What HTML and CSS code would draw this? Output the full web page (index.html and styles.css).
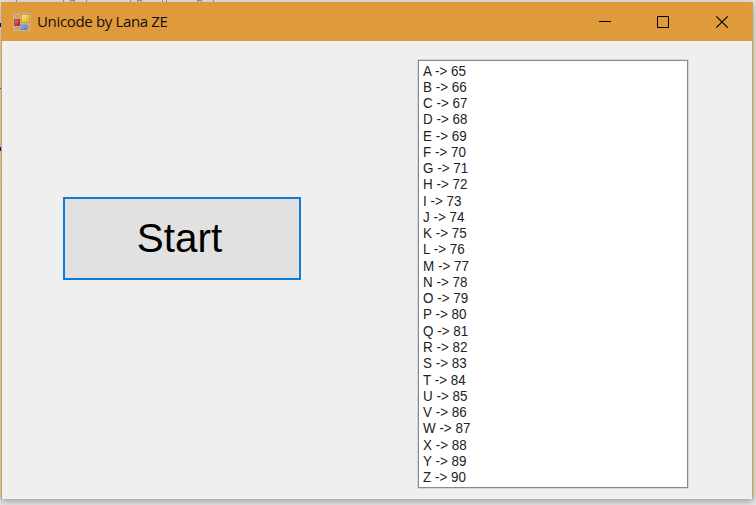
FILE: index.html
```html
<!DOCTYPE html>
<html lang="en">
<head>
<meta charset="utf-8">
<title>Unicode by Lana ZE</title>
<link rel="stylesheet" href="styles.css">
</head>
<body>
<svg class="backdrop" width="756" height="505" shape-rendering="crispEdges" aria-hidden="true">
  <g fill="#999">
    <rect x="16" width="1" height="2"/><rect x="63" width="1" height="2"/><rect x="70" width="5" height="1"/>
    <rect x="86" width="1" height="2"/><rect x="130" width="1" height="2"/><rect x="137" width="5" height="1"/>
    <rect x="162" width="1" height="2"/><rect x="166" width="1" height="2"/><rect x="197" width="5" height="1"/><rect x="213" width="1" height="2"/>
    <rect x="70" y="1" width="1" height="1"/><rect x="74" y="1" width="1" height="1"/>
    <rect x="137" y="1" width="1" height="1"/><rect x="141" y="1" width="1" height="1"/>
    <rect x="197" y="1" width="1" height="1"/><rect x="201" y="1" width="1" height="1"/>
  </g>
</svg>
<main class="window">
  <header class="titlebar">
    <svg class="app-icon" width="18" height="18" viewBox="0 0 18 18" aria-hidden="true">
      <defs>
        <linearGradient id="y" x2="1" y2="1"><stop stop-color="#fff08a"/><stop offset="1" stop-color="#e0a800"/></linearGradient>
        <linearGradient id="b" x2="1" y2="1"><stop stop-color="#9cc4ff"/><stop offset="1" stop-color="#3b74d8"/></linearGradient>
        <linearGradient id="r" x2="1" y2="1"><stop stop-color="#e08080"/><stop offset="1" stop-color="#a01818"/></linearGradient>
      </defs>
      <rect width="18" height="18" rx="1" fill="#c9b08c"/>
      <path d="M2 2h4v3H2zM2 14h4v2H2zM15 12h2v4h-2z" fill="#df9a3b"/>
      <rect x="8.5" y="1.5" width="8" height="8" fill="url(#y)" stroke="#b98a20" stroke-width=".6"/>
      <rect x="1.3" y="6.5" width="5.4" height="6" fill="url(#r)" stroke="#982020" stroke-width=".6"/>
      <rect x="8" y="12" width="6" height="4.5" fill="url(#b)" stroke="#4c78c8" stroke-width=".6"/>
    </svg>
    <h1 class="title">Unicode by Lana ZE</h1>
    <svg class="controls" width="130" height="14" viewBox="0 0 130 14" fill="none" stroke="#000" aria-hidden="true">
      <path d="M0 6.5h12M58.5 1.5h11v11h-11z"/>
      <path d="M117.3 1.3l11.4 11.4M128.7 1.3l-11.4 11.4" stroke-width="1.2"/>
    </svg>
  </header>
  <section class="client">
    <button class="start">Start</button>
    <ul class="list">
      <li>A -&gt; 65</li><li>B -&gt; 66</li><li>C -&gt; 67</li><li>D -&gt; 68</li><li>E -&gt; 69</li>
      <li>F -&gt; 70</li><li>G -&gt; 71</li><li>H -&gt; 72</li><li>I -&gt; 73</li><li>J -&gt; 74</li>
      <li>K -&gt; 75</li><li>L -&gt; 76</li><li>M -&gt; 77</li><li>N -&gt; 78</li><li>O -&gt; 79</li>
      <li>P -&gt; 80</li><li>Q -&gt; 81</li><li>R -&gt; 82</li><li>S -&gt; 83</li><li>T -&gt; 84</li>
      <li>U -&gt; 85</li><li>V -&gt; 86</li><li>W -&gt; 87</li><li>X -&gt; 88</li><li>Y -&gt; 89</li><li>Z -&gt; 90</li>
    </ul>
  </section>
</main>
<svg class="backdrop" width="1" height="505" shape-rendering="crispEdges" aria-hidden="true">
  <g fill="#0000e0"><rect y="23" width="1" height="4"/><rect y="147" width="1" height="4"/></g>
  <g fill="#7fbfdc"><rect y="39" width="1" height="1"/><rect y="52" width="1" height="1"/><rect y="163" width="1" height="1"/><rect y="176" width="1" height="1"/></g>
  <rect y="88" width="1" height="1" fill="#1060b0"/>
</svg>
</body>
</html>
```
FILE: styles.css
```css
* { box-sizing: border-box; }
body {
  margin: 0;
  width: 756px;
  height: 505px;
  overflow: hidden;
  padding: 2px 3px 6px 1px;
  background: #e8e8e8;
}
.backdrop { position: absolute; left: 0; top: 0; }
.window {
  position: relative;
  display: flex;
  flex-direction: column;
  height: 497px;
  background: #efefef;
  border: solid #df9a3b;
  border-width: 0 1px;
  box-shadow: 0 2px 8px rgba(0, 0, 0, .36);
}
.titlebar {
  display: flex;
  align-items: center;
  height: 39px;
  padding: 0 23px 0 11px;
  background: #df9a3b;
}
.title {
  margin: -2px auto 0 6px;
  font: 400 15px/20px "Open Sans", "Noto Sans", sans-serif;
  letter-spacing: -.34px;
  color: #111;
  white-space: nowrap;
}
.client {
  flex: 1;
  display: flex;
  align-items: flex-start;
  justify-content: space-between;
  padding: 19px 64px 0 61px;
}
.start {
  width: 238px;
  height: 83px;
  margin-top: 137px;
  padding: 0 5px 0 0;
  border: 2px solid #0f7bd6;
  background: #e1e1e1;
  color: #000;
  font: 40.4px "Liberation Sans", Arial, sans-serif;
}
.list {
  width: 270px;
  height: 428px;
  margin: 0;
  padding: 1.5px 0 0 3.5px;
  list-style: none;
  background: #fff;
  border: 1px solid #858b93;
  box-shadow: 0 0 0 .5px #b9bdc2;
  font: 15px/16.28px "Liberation Sans", Arial, sans-serif;
  color: #222;
}
.list li {
  height: 16.28px;
  transform: scaleX(.895);
  transform-origin: left;
}
```
